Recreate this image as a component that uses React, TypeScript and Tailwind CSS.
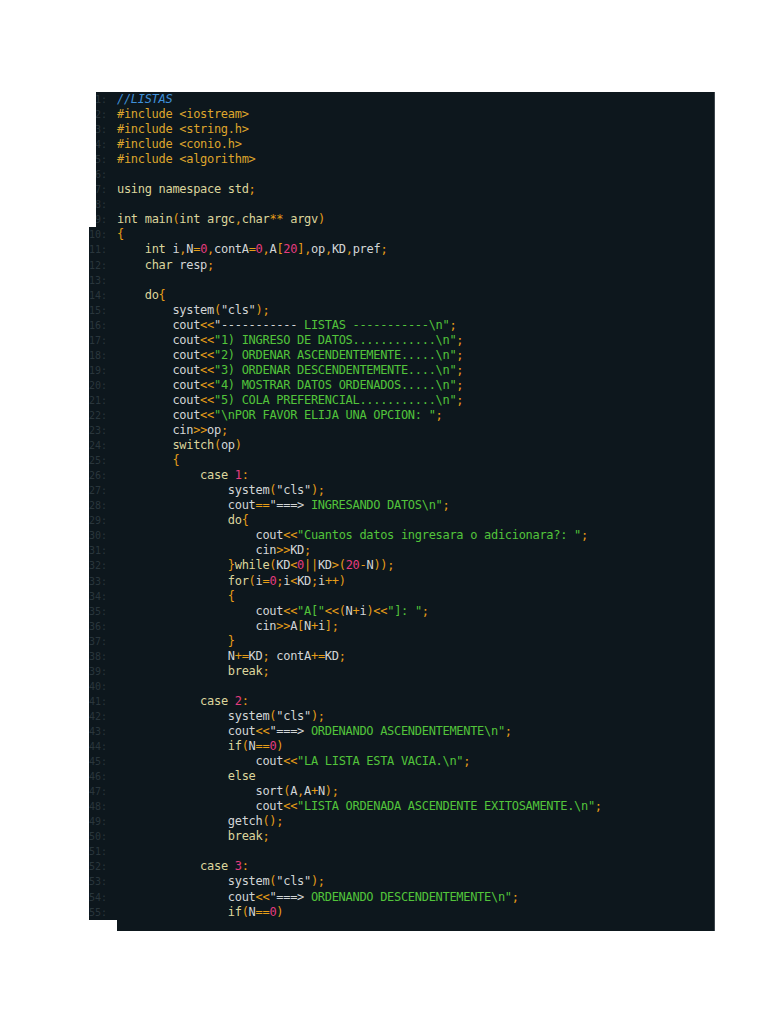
import React from 'react';

// Líneas del código tal como aparecen en la captura
const topLines = [
  '//LISTAS',
  '#include <iostream>',
  '#include <string.h>',
  '#include <conio.h>',
  '#include <algorithm>',
  '',
  'using namespace std;',
  '',
  'int main(int argc,char** argv)',
];

const mainLines = [
  '{',
  '    int i,N=0,contA=0,A[20],op,KD,pref;',
  '    char resp;',
  '',
  '    do{',
  '        system("cls");',
  '        cout<<"----------- LISTAS -----------\\n";',
  '        cout<<"1) INGRESO DE DATOS............\\n";',
  '        cout<<"2) ORDENAR ASCENDENTEMENTE.....\\n";',
  '        cout<<"3) ORDENAR DESCENDENTEMENTE....\\n";',
  '        cout<<"4) MOSTRAR DATOS ORDENADOS.....\\n";',
  '        cout<<"5) COLA PREFERENCIAL...........\\n";',
  '        cout<<"\\nPOR FAVOR ELIJA UNA OPCION: ";',
  '        cin>>op;',
  '        switch(op)',
  '        {',
  '            case 1:',
  '                system("cls");',
  '                cout=="===> INGRESANDO DATOS\\n";',
  '                do{',
  '                    cout<<"Cuantos datos ingresara o adicionara?: ";',
  '                    cin>>KD;',
  '                }while(KD<0||KD>(20-N));',
  '                for(i=0;i<KD;i++)',
  '                {',
  '                    cout<<"A["<<(N+i)<<"]: ";',
  '                    cin>>A[N+i];',
  '                }',
  '                N+=KD; contA+=KD;',
  '                break;',
  '',
  '            case 2:',
  '                system("cls");',
  '                cout<<"===> ORDENANDO ASCENDENTEMENTE\\n";',
  '                if(N==0)',
  '                    cout<<"LA LISTA ESTA VACIA.\\n";',
  '                else',
  '                    sort(A,A+N);',
  '                    cout<<"LISTA ORDENADA ASCENDENTE EXITOSAMENTE.\\n";',
  '                getch();',
  '                break;',
  '',
  '            case 3:',
  '                system("cls");',
  '                cout<<"===> ORDENANDO DESCENDENTEMENTE\\n";',
  '                if(N==0)',
];

type Kind = 'ws' | 'id' | 'kw' | 'op' | 'num' | 'str' | 'com' | 'pre';

const kindClass: Record<Kind, string> = {
  ws: '',
  id: 'text-[#d2d5d6]',
  kw: 'text-[#dcd59c]',
  op: 'text-[#e59d18]',
  num: 'text-[#e53c7f]',
  str: 'text-[#52c43b]',
  com: 'text-[#3f8fd8] italic',
  pre: 'text-[#dea52c]',
};

const keywords = new Set([
  'int', 'char', 'do', 'while', 'for', 'if', 'else', 'switch', 'case', 'break',
  'using', 'namespace', 'std', 'main', 'argc', 'argv',
]);

function tokenize(line: string): { t: string; k: Kind }[] {
  const out: { t: string; k: Kind }[] = [];
  if (line.startsWith('//')) return [{ t: line, k: 'com' }];
  if (line.startsWith('#')) return [{ t: line, k: 'pre' }];
  let i = 0;
  while (i < line.length) {
    const ch = line[i];
    if (ch === ' ') {
      let j = i;
      while (j < line.length && line[j] === ' ') j++;
      out.push({ t: line.slice(i, j), k: 'ws' });
      i = j;
    } else if (ch === '"') {
      let j = i + 1;
      while (j < line.length && line[j] !== '"') j++;
      const s = line.slice(i, j + 1);
      // en la captura algunas partes de las cadenas salen en gris
      if (s === '"cls"') out.push({ t: s, k: 'id' });
      else if (s.startsWith('"-----------')) {
        out.push({ t: s.slice(0, 12), k: 'id' });
        out.push({ t: s.slice(12), k: 'str' });
      } else if (s.startsWith('"===>')) {
        out.push({ t: s.slice(0, 5), k: 'id' });
        out.push({ t: s.slice(5), k: 'str' });
      } else out.push({ t: s, k: 'str' });
      i = j + 1;
    } else if (/[0-9]/.test(ch)) {
      let j = i;
      while (j < line.length && /[0-9]/.test(line[j])) j++;
      out.push({ t: line.slice(i, j), k: 'num' });
      i = j;
    } else if (/[A-Za-z_]/.test(ch)) {
      let j = i;
      while (j < line.length && /[A-Za-z_0-9]/.test(line[j])) j++;
      const w = line.slice(i, j);
      out.push({ t: w, k: keywords.has(w) ? 'kw' : 'id' });
      i = j;
    } else {
      out.push({ t: ch, k: 'op' });
      i++;
    }
  }
  return out;
}

function CodeRow({ n, line, gutter }: { n: number; line: string; gutter: string }) {
  return (
    <div className="flex h-[15.06px] items-center whitespace-pre">
      <div className={`${gutter} flex shrink-0 justify-end overflow-hidden text-[10px] leading-[15px] text-[#2a363c]`}>
        <span>{n}:</span>
      </div>
      <div className="ml-[10px] text-[12px] leading-[15px] tracking-[-0.3px]">
        {tokenize(line).map((tk, idx) => (
          <span key={idx} className={kindClass[tk.k]}>
            {tk.t}
          </span>
        ))}
      </div>
    </div>
  );
}

export default function App() {
  return (
    <div
      className="min-h-[1024px] w-full bg-white pt-[92px]"
      style={{ fontFamily: '"DejaVu Sans Mono", monospace' }}
    >
      <div className="flex flex-col">
        <div className="ml-[96px] w-[619px] overflow-hidden border-r border-[#3e464c] bg-[#0d171d]">
          {topLines.map((l, i) => (
            <CodeRow key={i} n={i + 1} line={l} gutter="w-[11px]" />
          ))}
        </div>
        <div className="ml-[89px] w-[626px] overflow-hidden border-r border-[#3e464c] bg-[#0d171d]">
          {mainLines.map((l, i) => (
            <CodeRow key={i} n={i + 10} line={l} gutter="w-[18px]" />
          ))}
        </div>
        <div className="ml-[117px] h-[11px] w-[598px] border-r border-[#3e464c] bg-[#0d171d]" />
      </div>
    </div>
  );
}
